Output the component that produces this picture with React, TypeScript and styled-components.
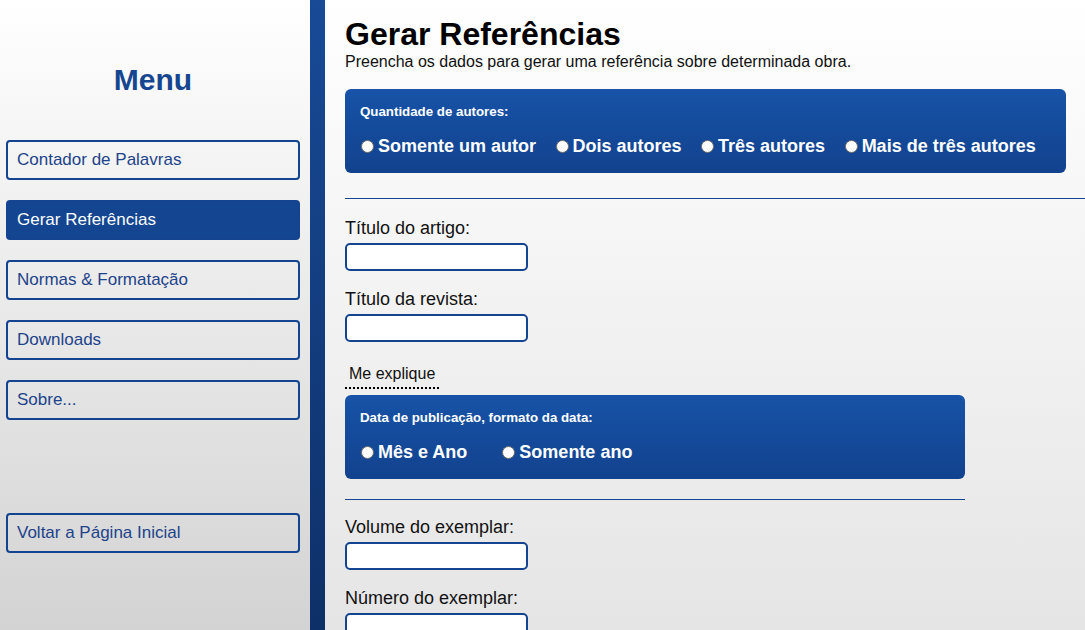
import React, { useState } from 'react';
import styled, { createGlobalStyle } from 'styled-components';

const GlobalStyle = createGlobalStyle`
  html, body {
    margin: 0;
    padding: 0;
    height: 100%;
    overflow: hidden;
  }
  body {
    font-family: "Liberation Sans", Arial, sans-serif;
    color: #111111;
  }
  * {
    box-sizing: border-box;
  }
`;

const menuItems = [
  'Contador de Palavras',
  'Gerar Referências',
  'Normas & Formatação',
  'Downloads',
  'Sobre...',
];

const authorOptions = ['Somente um autor', 'Dois autores', 'Três autores', 'Mais de três autores'];
const dateOptions = ['Mês e Ano', 'Somente ano'];

interface RadioGroupProps {
  title: string;
  name: string;
  options: string[];
  gap: number;
  wide?: boolean;
}

const RadioGroup = ({ title, name, options, gap, wide }: RadioGroupProps) => {
  const [value, setValue] = useState('');

  return (
    <OptionsBox $wide={wide}>
      <BoxTitle>{title}</BoxTitle>
      <OptionsRow $gap={gap}>
        {options.map((opt) => (
          <OptionLabel key={opt}>
            <Radio
              type="radio"
              name={name}
              checked={value === opt}
              onChange={() => setValue(opt)}
            />
            {opt}
          </OptionLabel>
        ))}
      </OptionsRow>
    </OptionsBox>
  );
};

// top = space above the label
const Field = ({ label, top = 18 }: { label: string; top?: number }) => (
  <FieldBlock $top={top}>
    <FieldLabel>{label}</FieldLabel>
    <TextInput type="text" />
  </FieldBlock>
);

const App = () => {
  const [active, setActive] = useState('Gerar Referências');

  return (
    <Page>
      <GlobalStyle />
      <Sidebar>
        <MenuTitle>Menu</MenuTitle>
        <MenuList>
          {menuItems.map((item) => (
            <MenuButton key={item} $active={active === item} onClick={() => setActive(item)}>
              {item}
            </MenuButton>
          ))}
        </MenuList>
        <BackList>
          <MenuButton $active={false}>Voltar a Página Inicial</MenuButton>
        </BackList>
      </Sidebar>
      <Divider />
      <Main>
        <Title>Gerar Referências</Title>
        <Subtitle>Preencha os dados para gerar uma referência sobre determinada obra.</Subtitle>

        <RadioGroup title="Quantidade de autores:" name="autores" options={authorOptions} gap={18.5} wide />
        <Rule $full />

        <Field label="Título do artigo:" top={19} />
        <Field label="Título da revista:" />

        <Explain>Me explique</Explain>

        <RadioGroup title="Data de publicação, formato da data:" name="data" options={dateOptions} gap={34} />
        <Rule />

        <Field label="Volume do exemplar:" top={17} />
        <Field label="Número do exemplar:" />
        <Field label="Página inicial:" />
        <Field label="Página final:" />
      </Main>
    </Page>
  );
};

export default App;

const Page = styled.div`
  display: flex;
  height: 100vh;
  width: 100%;
`;

const Sidebar = styled.aside`
  width: 310px;
  flex-shrink: 0;
  padding: 63px 10px 0 6px;
  background: linear-gradient(to bottom, #ffffff 0%, #d3d3d3 100%);
  display: flex;
  flex-direction: column;
`;

const MenuTitle = styled.h2`
  margin: 0 0 42px;
  font-size: 30px;
  font-weight: bold;
  text-align: center;
  color: #16468f;
  line-height: 34.5px;
`;

const MenuList = styled.nav`
  display: flex;
  flex-direction: column;
  gap: 20px;
`;

const BackList = styled.nav`
  margin-top: 93px;
  display: flex;
  flex-direction: column;
`;

const MenuButton = styled.a<{ $active: boolean }>`
  display: flex;
  align-items: center;
  height: 40px;
  padding: 0 9px;
  border: 2px solid #14448f;
  border-radius: 4px;
  font-size: 17px;
  color: ${(p) => (p.$active ? '#ffffff' : '#1d438a')};
  background: ${(p) => (p.$active ? '#134590' : 'transparent')};
  cursor: pointer;
  text-decoration: none;
`;

const Divider = styled.div`
  width: 15px;
  flex-shrink: 0;
  background: linear-gradient(to bottom, #184a96 0%, #0e3068 100%);
`;

const Main = styled.main`
  flex: 1;
  padding: 16px 0 40px 20px;
  background: linear-gradient(to bottom, #ffffff 0%, #e5e5e5 100vh);
  overflow-y: auto;
  scrollbar-width: none;
  &::-webkit-scrollbar {
    display: none;
  }
`;

const Title = styled.h1`
  margin: 0;
  font-size: 32px;
  font-weight: bold;
  line-height: 36.8px;
  color: #000000;
`;

const Subtitle = styled.p`
  margin: 0;
  font-size: 16px;
  line-height: 18.4px;
  color: #111111;
`;

const OptionsBox = styled.div<{ $wide?: boolean }>`
  margin-top: ${(p) => (p.$wide ? '18px' : '6px')};
  margin-right: 19px;
  width: ${(p) => (p.$wide ? 'auto' : '620px')};
  padding: 15px 15px 16px;
  border-radius: 6px;
  background: linear-gradient(to bottom, #1753a7 0%, #12428e 100%);
  color: #ffffff;
`;

const BoxTitle = styled.div`
  font-size: 13.3px;
  font-weight: bold;
  line-height: 15px;
  margin-bottom: 17px;
`;

const OptionsRow = styled.div<{ $gap: number }>`
  display: flex;
  align-items: center;
  gap: ${(p) => p.$gap}px;
  height: 21px;
`;

const OptionLabel = styled.label`
  display: flex;
  align-items: center;
  gap: 4px;
  font-size: 18px;
  font-weight: bold;
  line-height: 21px;
  cursor: pointer;
`;

const Radio = styled.input`
  appearance: none;
  margin: 0 0 0 1px;
  width: 13px;
  height: 13px;
  border-radius: 50%;
  background: #ffffff;
  border: 1px solid #6a6a6a;
  cursor: pointer;
  &:checked {
    background: radial-gradient(circle, #14448f 0 3px, #ffffff 3.5px);
  }
`;

const Rule = styled.hr<{ $full?: boolean }>`
  margin: ${(p) => (p.$full ? '25px 0 0' : '20px 0 0')};
  width: ${(p) => (p.$full ? '100%' : '620px')};
  height: 1px;
  border: none;
  background: #164591;
`;

const FieldBlock = styled.div<{ $top: number }>`
  display: flex;
  flex-direction: column;
  align-items: flex-start;
  margin-top: ${(p) => p.$top}px;
`;

const FieldLabel = styled.label`
  font-size: 18px;
  line-height: 20px;
  color: #111111;
`;

const TextInput = styled.input`
  margin-top: 5px;
  width: 183px;
  height: 28px;
  border: 2px solid #14448f;
  border-radius: 5px;
  background: #ffffff;
  padding: 0 6px;
  font-family: inherit;
  font-size: 15px;
  outline: none;
`;

const Explain = styled.span`
  display: inline-block;
  margin-top: 23px;
  padding: 0 4px 4px;
  font-size: 16px;
  line-height: 18px;
  color: #111111;
  border-bottom: 2px dotted #000000;
  cursor: help;
`;
